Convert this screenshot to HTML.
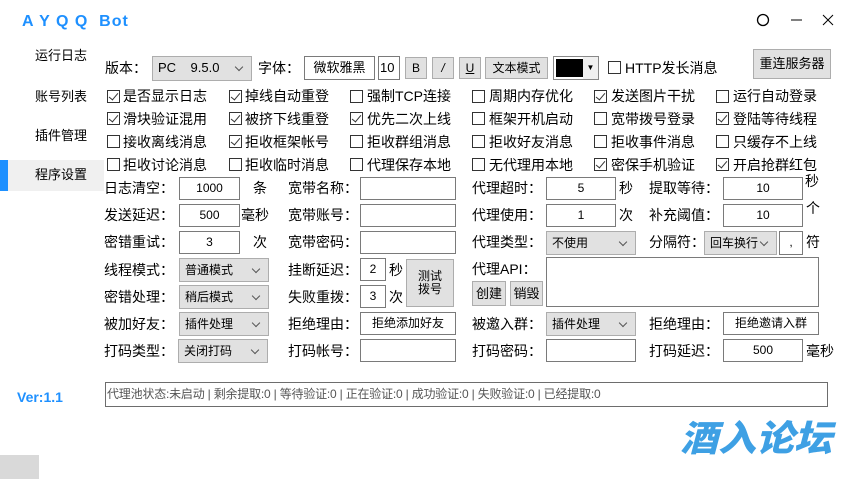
<!DOCTYPE html>
<html><head><meta charset="utf-8"><style>
*{margin:0;padding:0;box-sizing:border-box}
body{width:853px;height:479px;background:#fff;position:relative;overflow:hidden;font-family:"Liberation Sans","Noto Sans CJK SC",sans-serif;font-size:13px;color:#000}
.a{position:absolute;white-space:nowrap}
.t{position:absolute;white-space:nowrap;line-height:16px}
.k{font-size:14px;top:0}
.in{position:absolute;border:1px solid #7a7a7a;background:#fff;font-size:12px;text-align:center;line-height:21px;height:23px}
.sel{position:absolute;border:1px solid #adadad;background:#e1e1e1;font-size:12px;line-height:22px;height:24px;padding-left:5px}
.sel:after{content:"";position:absolute;right:9px;top:7px;width:5px;height:5px;border-right:1px solid #555;border-bottom:1px solid #555;transform:rotate(45deg)}
.btn{position:absolute;border:1px solid #adadad;background:#e1e1e1;text-align:center;font-size:12px}
.cb{position:absolute;width:13px;height:13px;border:1px solid #333;background:#fff}
.cb.c:after{content:"";position:absolute;left:3px;top:0px;width:4px;height:8px;border-right:1px solid #333;border-bottom:1px solid #333;transform:rotate(40deg)}
.cl{position:absolute;white-space:nowrap;line-height:16px;font-size:14px}
</style></head><body>
<div class="a" style="left:22px;top:13px;font-size:16px;font-weight:bold;color:#1e90ff;letter-spacing:1px">A Y Q Q&nbsp; Bot</div>
<svg class="a" style="left:755px;top:12px" width="80" height="18"><circle cx="8" cy="8" r="5.5" fill="none" stroke="#000" stroke-width="1.3"/><line x1="36" y1="8" x2="47" y2="8" stroke="#000"/><path d="M68 3 L78 13 M78 3 L68 13" stroke="#000"/></svg>
<div class="t" style="left:35px;top:48px">运行日志</div>
<div class="t" style="left:35px;top:89px">账号列表</div>
<div class="t" style="left:35px;top:128px">插件管理</div>
<div class="a" style="left:8px;top:160px;width:96px;height:31px;background:#f0f0f0"></div>
<div class="a" style="left:0;top:160px;width:8px;height:31px;background:#1e90ff"></div>
<div class="t" style="left:35px;top:167px">程序设置</div>

<div class="t" style="left:105px;top:60px;font-size:14px">版本：</div>
<div class="sel" style="left:152px;top:56px;width:100px;height:25px;font-size:13px">PC&nbsp;&nbsp;&nbsp; 9.5.0</div>
<div class="t" style="left:258px;top:60px;font-size:14px">字体：</div>
<div class="in" style="left:304px;top:56px;width:71px;height:24px;font-size:13px">微软雅黑</div>
<div class="in" style="left:378px;top:56px;width:22px;height:24px;font-size:13px;text-align:left;padding-left:1px">10</div>
<div class="btn" style="left:405px;top:57px;width:22px;height:22px;line-height:20px">B</div>
<div class="btn" style="left:432px;top:57px;width:22px;height:22px;line-height:20px;font-style:italic">/</div>
<div class="btn" style="left:459px;top:57px;width:22px;height:22px;line-height:20px;text-decoration:underline">U</div>
<div class="btn" style="left:485px;top:57px;width:63px;height:22px;line-height:20px">文本模式</div>
<div class="a" style="left:553px;top:56px;width:46px;height:24px;border:1px solid #888;background:#fff"><div style="position:absolute;left:2px;top:2px;width:27px;height:18px;background:#000"></div><div style="position:absolute;right:0;top:0;width:15px;height:22px;background:#f0f0f0;font-size:8px;text-align:center;line-height:22px">▼</div></div>
<div class="cb" style="left:608px;top:61px"></div>
<div class="t" style="left:625px;top:60px;font-size:14px">HTTP发长消息</div>
<div class="btn" style="left:753px;top:49px;width:78px;height:30px;line-height:28px;font-size:13px">重连服务器</div>

<div class="cb c" style="left:107px;top:90px"></div><div class="cl" style="left:123px;top:88px">是否显示日志</div>
<div class="cb c" style="left:229px;top:90px"></div><div class="cl" style="left:245px;top:88px">掉线自动重登</div>
<div class="cb" style="left:350px;top:90px"></div><div class="cl" style="left:367px;top:88px">强制TCP连接</div>
<div class="cb" style="left:472px;top:90px"></div><div class="cl" style="left:489px;top:88px">周期内存优化</div>
<div class="cb c" style="left:594px;top:90px"></div><div class="cl" style="left:611px;top:88px">发送图片干扰</div>
<div class="cb" style="left:716px;top:90px"></div><div class="cl" style="left:733px;top:88px">运行自动登录</div>

<div class="cb c" style="left:107px;top:112px"></div><div class="cl" style="left:123px;top:111px">滑块验证混用</div>
<div class="cb c" style="left:229px;top:112px"></div><div class="cl" style="left:245px;top:111px">被挤下线重登</div>
<div class="cb c" style="left:350px;top:112px"></div><div class="cl" style="left:367px;top:111px">优先二次上线</div>
<div class="cb" style="left:472px;top:112px"></div><div class="cl" style="left:489px;top:111px">框架开机启动</div>
<div class="cb" style="left:594px;top:112px"></div><div class="cl" style="left:611px;top:111px">宽带拨号登录</div>
<div class="cb c" style="left:716px;top:112px"></div><div class="cl" style="left:733px;top:111px">登陆等待线程</div>

<div class="cb" style="left:107px;top:135px"></div><div class="cl" style="left:123px;top:134px">接收离线消息</div>
<div class="cb c" style="left:229px;top:135px"></div><div class="cl" style="left:245px;top:134px">拒收框架帐号</div>
<div class="cb" style="left:350px;top:135px"></div><div class="cl" style="left:367px;top:134px">拒收群组消息</div>
<div class="cb" style="left:472px;top:135px"></div><div class="cl" style="left:489px;top:134px">拒收好友消息</div>
<div class="cb" style="left:594px;top:135px"></div><div class="cl" style="left:611px;top:134px">拒收事件消息</div>
<div class="cb" style="left:716px;top:135px"></div><div class="cl" style="left:733px;top:134px">只缓存不上线</div>

<div class="cb" style="left:107px;top:158px"></div><div class="cl" style="left:123px;top:157px">拒收讨论消息</div>
<div class="cb" style="left:229px;top:158px"></div><div class="cl" style="left:245px;top:157px">拒收临时消息</div>
<div class="cb" style="left:350px;top:158px"></div><div class="cl" style="left:367px;top:157px">代理保存本地</div>
<div class="cb" style="left:472px;top:158px"></div><div class="cl" style="left:489px;top:157px">无代理用本地</div>
<div class="cb c" style="left:594px;top:158px"></div><div class="cl" style="left:611px;top:157px">密保手机验证</div>
<div class="cb c" style="left:716px;top:158px"></div><div class="cl" style="left:733px;top:157px">开启抢群红包</div>

<div class="t" style="left:104px;top:180px;font-size:14px">日志清空：</div><div class="in" style="left:179px;top:177px;width:61px">1000</div><div class="t" style="left:253px;top:180px;font-size:14px">条</div>
<div class="t" style="left:104px;top:207px;font-size:14px">发送延迟：</div><div class="in" style="left:179px;top:204px;width:61px">500</div><div class="t" style="left:241px;top:207px;font-size:14px">毫秒</div>
<div class="t" style="left:104px;top:234px;font-size:14px">密错重试：</div><div class="in" style="left:179px;top:231px;width:61px">3</div><div class="t" style="left:253px;top:234px;font-size:14px">次</div>
<div class="t" style="left:104px;top:262px;font-size:14px">线程模式：</div><div class="sel" style="left:179px;top:258px;width:90px">普通模式</div>
<div class="t" style="left:104px;top:289px;font-size:14px">密错处理：</div><div class="sel" style="left:179px;top:285px;width:90px">稍后模式</div>
<div class="t" style="left:104px;top:316px;font-size:14px">被加好友：</div><div class="sel" style="left:179px;top:312px;width:90px">插件处理</div>
<div class="t" style="left:104px;top:343px;font-size:14px">打码类型：</div><div class="sel" style="left:178px;top:339px;width:90px">关闭打码</div>

<div class="t" style="left:288px;top:180px;font-size:14px">宽带名称：</div><div class="in" style="left:360px;top:177px;width:96px"></div>
<div class="t" style="left:288px;top:207px;font-size:14px">宽带账号：</div><div class="in" style="left:360px;top:204px;width:96px"></div>
<div class="t" style="left:288px;top:234px;font-size:14px">宽带密码：</div><div class="in" style="left:360px;top:231px;width:96px"></div>
<div class="t" style="left:288px;top:262px;font-size:14px">挂断延迟：</div><div class="in" style="left:360px;top:258px;width:26px">2</div><div class="t" style="left:389px;top:262px;font-size:14px">秒</div>
<div class="t" style="left:288px;top:289px;font-size:14px">失败重拨：</div><div class="in" style="left:360px;top:285px;width:26px">3</div><div class="t" style="left:389px;top:289px;font-size:14px">次</div>
<div class="btn" style="left:406px;top:259px;width:48px;height:48px;line-height:13px;padding-top:10px">测试<br>拨号</div>
<div class="t" style="left:288px;top:316px;font-size:14px">拒绝理由：</div><div class="in" style="left:360px;top:312px;width:96px">拒绝添加好友</div>
<div class="t" style="left:288px;top:343px;font-size:14px">打码帐号：</div><div class="in" style="left:360px;top:339px;width:96px"></div>

<div class="t" style="left:472px;top:180px;font-size:14px">代理超时：</div><div class="in" style="left:546px;top:177px;width:70px">5</div><div class="t" style="left:619px;top:180px;font-size:14px">秒</div>
<div class="t" style="left:472px;top:207px;font-size:14px">代理使用：</div><div class="in" style="left:546px;top:204px;width:70px">1</div><div class="t" style="left:619px;top:207px;font-size:14px">次</div>
<div class="t" style="left:472px;top:234px;font-size:14px">代理类型：</div><div class="sel" style="left:546px;top:231px;width:90px">不使用</div>
<div class="t" style="left:472px;top:261px;font-size:14px">代理API：</div>
<div class="in" style="left:546px;top:257px;width:273px;height:50px"></div>
<div class="btn" style="left:472px;top:281px;width:34px;height:25px;line-height:23px;font-size:13px">创建</div>
<div class="btn" style="left:510px;top:281px;width:33px;height:25px;line-height:23px;font-size:13px">销毁</div>
<div class="t" style="left:472px;top:316px;font-size:14px">被邀入群：</div><div class="sel" style="left:546px;top:312px;width:90px">插件处理</div>
<div class="t" style="left:472px;top:343px;font-size:14px">打码密码：</div><div class="in" style="left:546px;top:339px;width:90px"></div>

<div class="t" style="left:649px;top:180px;font-size:14px">提取等待：</div><div class="in" style="left:723px;top:177px;width:80px">10</div><div class="t" style="left:805px;top:173px;font-size:14px">秒</div>
<div class="t" style="left:649px;top:207px;font-size:14px">补充阈值：</div><div class="in" style="left:723px;top:204px;width:80px">10</div><div class="t" style="left:806px;top:200px;font-size:14px">个</div>
<div class="t" style="left:649px;top:234px;font-size:14px">分隔符：</div><div class="sel" style="left:704px;top:231px;width:73px">回车换行</div><div class="in" style="left:779px;top:231px;width:24px;height:24px">,</div><div class="t" style="left:806px;top:234px;font-size:14px">符</div>
<div class="t" style="left:649px;top:316px;font-size:14px">拒绝理由：</div><div class="in" style="left:723px;top:312px;width:96px">拒绝邀请入群</div>
<div class="t" style="left:649px;top:343px;font-size:14px">打码延迟：</div><div class="in" style="left:723px;top:339px;width:80px">500</div><div class="t" style="left:806px;top:343px;font-size:14px">毫秒</div>

<div class="a" style="left:17px;top:389px;font-size:14px;font-weight:bold;color:#1e90ff">Ver:1.1</div>
<div class="a" style="left:105px;top:382px;width:723px;height:25px;border:1px solid #6d6d6d;font-size:12px;line-height:23px;padding-left:1px;color:#555;letter-spacing:-0.2px">代理池状态:未启动 | 剩余提取:0 | 等待验证:0 | 正在验证:0 | 成功验证:0 | 失败验证:0 | 已经提取:0</div>
<div class="a" style="left:680px;top:414px;font-size:38px;font-weight:900;font-style:italic;color:#3ea0e4;font-family:'Noto Sans CJK SC',sans-serif;line-height:44px;transform:scaleY(0.95)">酒入论坛</div>
<div class="a" style="left:0;top:455px;width:39px;height:24px;background:#d9d9d9"></div>
</body></html>
